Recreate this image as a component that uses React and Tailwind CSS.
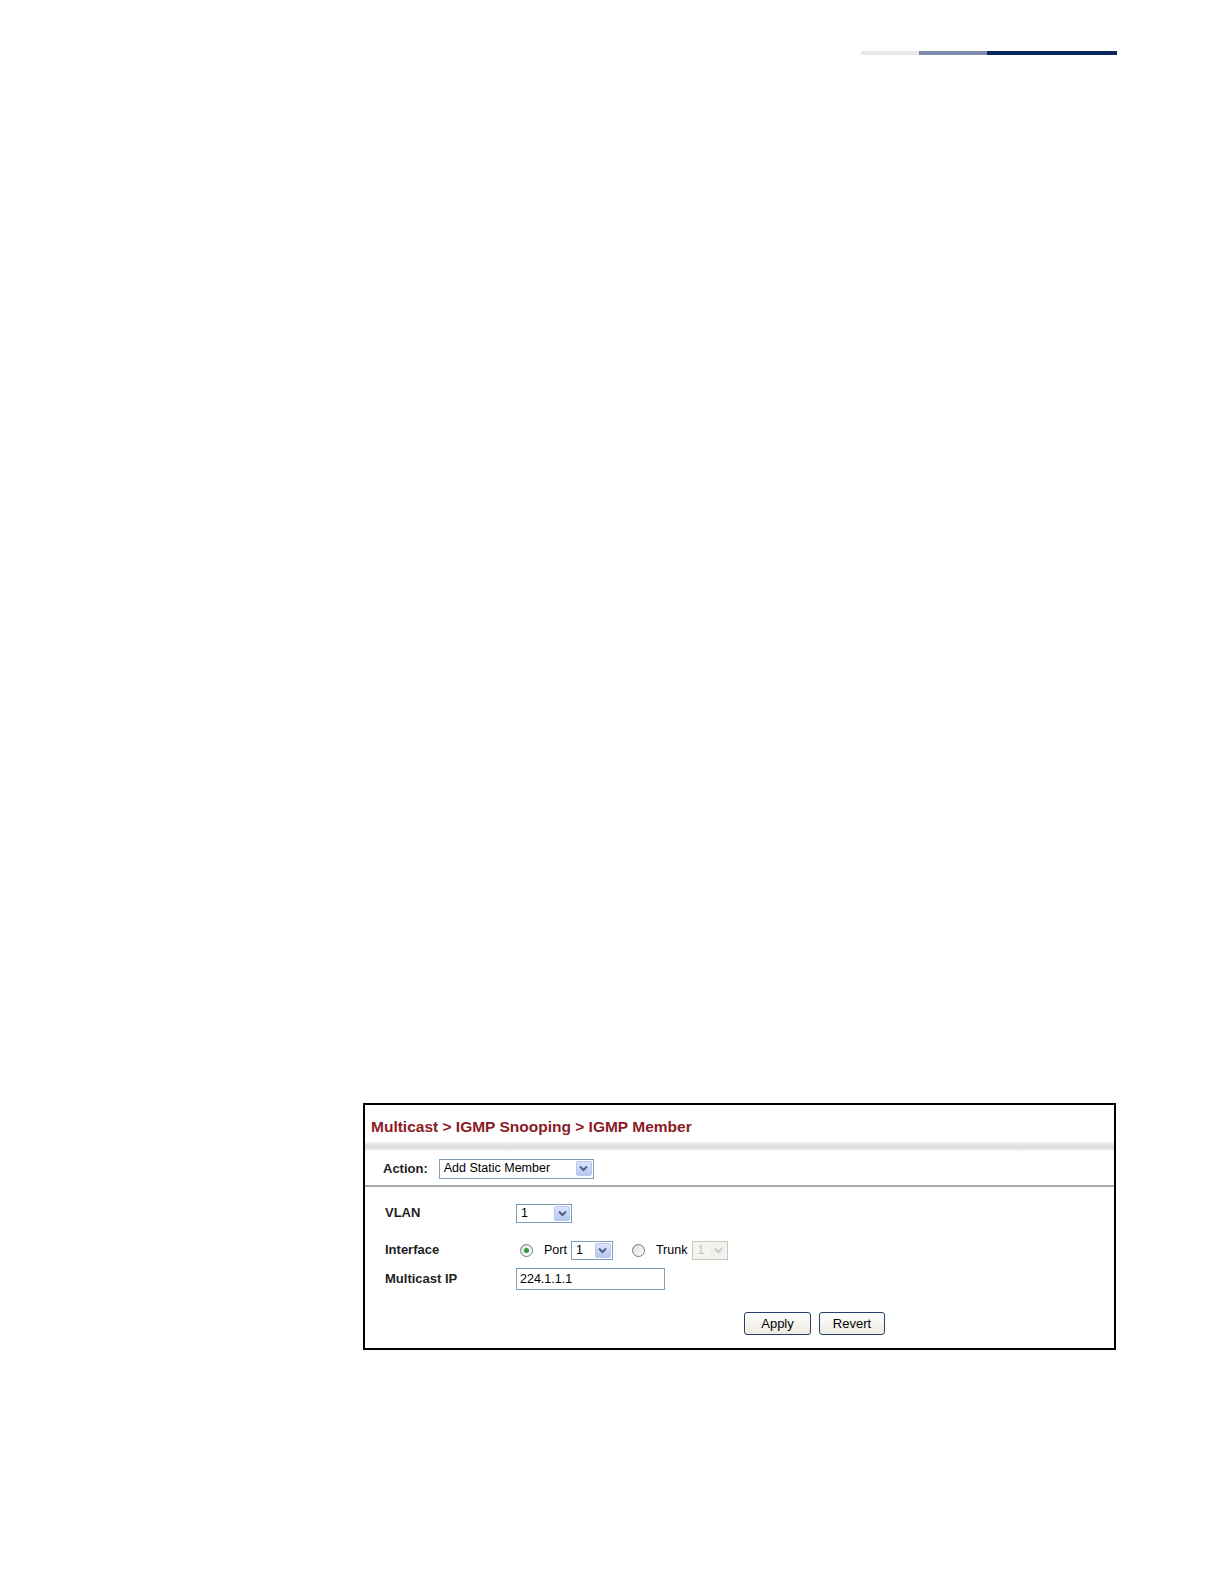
import React from 'react'

const font = { fontFamily: '"Liberation Sans", Arial, sans-serif' }

function Chevron({ color = '#4d6185' }) {
  return (
    <svg width="9" height="7" viewBox="0 0 9 7">
      <path d="M1 1.5 L4.5 5 L8 1.5" fill="none" stroke={color} strokeWidth="2" />
    </svg>
  )
}

function Select({ value, width, height = 19, disabled }) {
  return (
    <div
      className={`flex items-center border ${disabled ? 'border-[#c9c7ba] bg-[#f4f4f0]' : 'border-[#7f9db9] bg-white'}`}
      style={{ width, height }}
    >
      <span className={`flex-1 pl-[4px] text-[12.5px] leading-none ${disabled ? 'text-[#c0c0c0]' : 'text-black'}`}>
        {value}
      </span>
      <div
        className={`w-[16px] h-[15px] mr-[1px] flex items-center justify-center rounded-[2px] ${
          disabled ? 'bg-[#f0f0ec]' : 'bg-gradient-to-b from-[#dbe5fb] to-[#b5c8f3] border border-[#b9c9ef]'
        }`}
      >
        <Chevron color={disabled ? '#c8c8c8' : '#4d6185'} />
      </div>
    </div>
  )
}

function Radio({ checked }) {
  return (
    <div className="w-[13px] h-[13px] rounded-full border border-[#6f7a86] bg-gradient-to-br from-[#dcdcd6] to-white flex items-center justify-center">
      {checked && <div className="w-[5px] h-[5px] rounded-full bg-[#2f9a3a]" />}
    </div>
  )
}

function Button({ children, width }) {
  return (
    <div
      className="h-[23px] flex items-center justify-center rounded-[3px] border border-[#25406b] bg-gradient-to-b from-white to-[#eceae0] text-[13px] text-black"
      style={{ width }}
    >
      {children}
    </div>
  )
}

function Row({ label, height, children, className = '' }) {
  return (
    <div className={`flex items-center pl-[20px] ${className}`} style={{ height }}>
      <div className="w-[131px] text-[13px] font-bold text-[#1e1e1e]">{label}</div>
      <div className="flex items-center">{children}</div>
    </div>
  )
}

export default function App() {
  return (
    <div className="w-[1224px] h-[1584px] bg-white pt-[51px]" style={font}>
      {/* header rule */}
      <div className="flex justify-end pr-[107px]">
        <div className="w-[58px] h-[4px] bg-[#e6e7ea]" />
        <div className="w-[68px] h-[4px] bg-[#7f8cab]" />
        <div className="w-[130px] h-[4px] bg-[#0b2760]" />
      </div>

      {/* screenshot panel */}
      <div className="mt-[1048px] ml-[363px] w-[753px] h-[247px] border-2 border-black">
        <div className="h-[37px] pt-[13px] pl-[6px]">
          <div className="text-[15.5px] leading-[18px] font-bold text-[#8b1b26]">
            Multicast &gt; IGMP Snooping &gt; IGMP Member
          </div>
        </div>
        <div className="h-[10px] bg-gradient-to-b from-[#f2f2f2] via-[#d9d9d9] to-white" />

        <div className="h-[33px] flex items-center pl-[18px]">
          <span className="text-[13px] font-bold text-[#1e1e1e] mr-[11px]">Action:</span>
          <Select value="Add Static Member" width={155} height={20} />
        </div>
        <div className="h-[2px] bg-[#a9a9a9]" />

        <Row label="VLAN" height={28} className="mt-[12px]">
          <Select value="1" width={56} />
        </Row>

        <Row label="Interface" height={30} className="mt-[8px]">
          <div className="ml-[4px]"><Radio checked /></div>
          <span className="ml-[11px] text-[12.5px] text-black">Port</span>
          <div className="ml-[4px]"><Select value="1" width={42} /></div>
          <div className="ml-[19px]"><Radio /></div>
          <span className="ml-[11px] text-[12.5px] text-black">Trunk</span>
          <div className="ml-[5px]"><Select value="1" width={36} disabled /></div>
        </Row>

        <Row label="Multicast IP" height={28}>
          <div className="w-[149px] h-[22px] border border-[#7f9db9] bg-white flex items-center pl-[3px] text-[12.5px] text-black">
            224.1.1.1
          </div>
        </Row>

        <div className="mt-[19px] pl-[379px] flex gap-[8px]">
          <Button width={67}>Apply</Button>
          <Button width={66}>Revert</Button>
        </div>
      </div>
    </div>
  )
}
